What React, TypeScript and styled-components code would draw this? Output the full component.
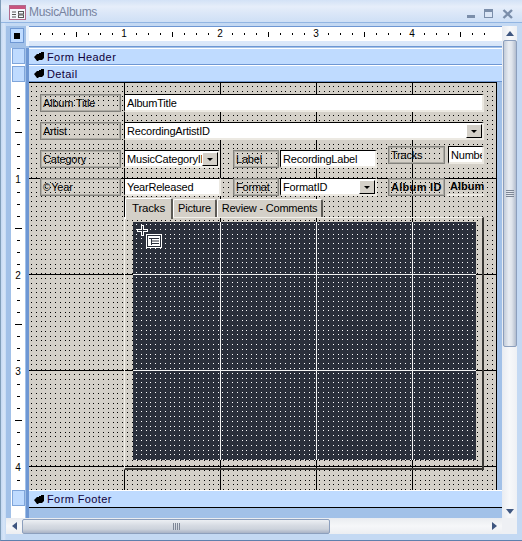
import React from 'react'
import styled, { createGlobalStyle, css } from 'styled-components'

const GlobalStyle = createGlobalStyle`
	html, body {
		margin: 0;
		padding: 0;
		background: #fff;
	}
	* {
		box-sizing: border-box;
	}
`

const dotTile = (color: string) => {
	const steps = [0, 5, 10, 14, 19]
	const rects = steps
		.flatMap(y => steps.map(x => `<rect x='${x}' y='${y}' width='1' height='1' fill='${color}'/>`))
		.join('')
	return `url("data:image/svg+xml,${encodeURIComponent(
		`<svg xmlns='http://www.w3.org/2000/svg' width='24' height='24' shape-rendering='crispEdges'>${rects}</svg>`
	)}")`
}

const gridLines = (color: string) => css`
	linear-gradient(to right, ${color} 1px, transparent 1px),
	linear-gradient(to bottom, ${color} 1px, transparent 1px)
`

const Window = styled.div`
	width: 522px;
	height: 541px;
	display: flex;
	flex-direction: column;
	overflow: hidden;
	font-family: 'Liberation Sans', Arial, sans-serif;
	font-size: 11px;
	letter-spacing: -0.2px;
	color: #000;
	background: #c4d9f3;
	border-left: 1px solid #7f9db9;
	border-bottom: 1px solid #5f80ad;
`

const TitleBar = styled.div`
	flex: none;
	height: 23px;
	display: flex;
	align-items: center;
	padding: 2px 8px 0 8px;
	background: linear-gradient(#d3e2f6, #e6eefa 30%, #dbe7f8 60%, #cfe0f6);
	border-bottom: 1px solid #92b5e2;
`

const AppIcon = styled.svg`
	flex: none;
	width: 17px;
	height: 15px;
	margin-right: 3px;
`

const TitleText = styled.span`
	font-size: 12px;
	color: #76839f;
	letter-spacing: -0.3px;
`

const WindowButtons = styled.div`
	margin-left: auto;
	margin-top: 3px;
	display: flex;
	align-items: center;
	gap: 8px;
`

const ClientFrame = styled.div`
	flex: 1;
	min-height: 0;
	display: flex;
	flex-direction: column;
	padding: 3px 5px 6px 5px;
	background: linear-gradient(90deg, #c4d9f3, #d8e6f8 3px, #c4d9f3 5px);
`

const TopRow = styled.div`
	flex: 1;
	min-height: 0;
	display: flex;
`

const DesignSurface = styled.div`
	flex: 1;
	min-width: 0;
	display: flex;
	flex-direction: column;
	background: #a2c1e8;
`

const RulerRow = styled.div`
	flex: none;
	height: 20px;
	display: flex;
	background: #e9f1fc;
`

const CornerCell = styled.div`
	flex: none;
	width: 20px;
	padding: 2px 2px 2px 4px;
	background: #a2c1e8;
`

const CornerBox = styled.div`
	width: 14px;
	height: 15px;
	display: flex;
	align-items: center;
	justify-content: center;
	background: #bfdbff;
	border: 1px solid #6e97d3;
	&::after {
		content: '';
		width: 6px;
		height: 6px;
		background: #000;
	}
`

const TopRuler = styled.div`
	flex: 1;
	display: flex;
	margin-left: 3px;
	padding-left: 5px;
	align-items: center;
	height: 18px;
	background: #fff;
	border-top: 1px solid #6e97d3;
	border-bottom: 3px solid #dbe8fa;
	box-shadow: 0 2px 0 #d8e6f8, 0 3px 0 #6e97d3;
`

const TickCell = styled.div`
	flex: none;
	width: 12px;
	height: 12px;
	display: flex;
	align-items: center;
	justify-content: center;
	font-size: 10px;
	letter-spacing: 0;
	line-height: 1;
`

const Tick = styled.i<{ $big?: boolean; $vertical?: boolean }>`
	display: block;
	background: #000;
	width: ${({ $big, $vertical }) => ($vertical ? ($big ? 7 : 3) : 1)}px;
	height: ${({ $big, $vertical }) => ($vertical ? 1 : $big ? 5 : 2)}px;
`

const BodyRow = styled.div`
	flex: 1;
	min-height: 0;
	display: flex;
	margin-top: 2px;
`

const SideRuler = styled.div`
	flex: none;
	width: 23px;
	display: flex;
	flex-direction: column;
	padding-left: 5px;
	background: linear-gradient(90deg, #a2c1e8 5px, #fff 5px, #fff 19px, #a2c1e8 19px, #a2c1e8 20px, #6e97d3 20px);
`

const SideBox = styled.div<{ $h: number; $mb?: number }>`
	flex: none;
	width: 13px;
	height: ${({ $h }) => $h}px;
	margin-left: 1px;
	margin-bottom: ${({ $mb }) => $mb ?? 0}px;
	background: #bfdbff;
	border: 1px solid #7fa5da;
`

const SideTicks = styled.div`
	flex: none;
	height: 408px;
	width: 14px;
	padding-top: 8px;
	overflow: hidden;
`

const SideTickCell = styled(TickCell)`
	width: 14px;
`

const Sections = styled.div`
	flex: 1;
	min-width: 0;
	display: flex;
	flex-direction: column;
`

const SectionBar = styled.div<{ $last?: boolean }>`
	flex: none;
	height: ${({ $last }) => ($last ? 18 : 17)}px;
	display: flex;
	align-items: center;
	padding-left: 5px;
	gap: 3px;
	font-size: 11px;
	letter-spacing: 0.4px;
	color: #10003a;
	background: #bfdbff;
	border-top: 1px solid #fff;
	border-bottom: 1px solid ${({ $last }) => ($last ? '#000' : '#6e97d3')};
`

const BarGlyph = styled.svg`
	flex: none;
	width: 10px;
	height: 9px;
`

const Canvas = styled.div`
	position: relative;
	flex: none;
	width: 468px;
	height: 408px;
	background-color: #d4d0c8;
	background-image: ${gridLines('#000')}, ${dotTile('#000')};
	background-size: 96px 96px, 96px 96px, 24px 24px;
	background-position: -1px 0, 0 0, 2px 4px;
	border-right: 1px solid #000;
`

const Placed = css<{ $x: number; $y: number; $w: number; $h?: number }>`
	position: absolute;
	left: ${({ $x }) => $x}px;
	top: ${({ $y }) => $y}px;
	width: ${({ $w }) => $w}px;
	height: ${({ $h }) => $h ?? 18}px;
`

const FieldLabel = styled.div<{ $x: number; $y: number; $w: number; $h?: number; $bold?: boolean }>`
	${Placed}
	display: flex;
	align-items: center;
	padding-left: 2px;
	white-space: nowrap;
	overflow: hidden;
	font-weight: ${({ $bold }) => ($bold ? 700 : 400)};
	letter-spacing: ${({ $bold }) => ($bold ? 0.3 : -0.2)}px;
	border: 1px solid #83827d;
	box-shadow: inset 0 0 0 1px #aeaca5;
`

const YearMark = styled.span`
	font-size: 10px;
	margin-right: 1px;
`

const TextBox = styled.div<{ $x: number; $y: number; $w: number; $h?: number }>`
	${Placed}
	display: flex;
	align-items: center;
	padding-left: 2px;
	background: #fff;
	white-space: nowrap;
	overflow: hidden;
	border-top: 1px solid #000;
	border-left: 1px solid #000;
	border-right: 2px solid #ece9e2;
	border-bottom: 2px solid #ece9e2;
`

const BoldValue = styled.div<{ $x: number; $y: number; $w: number; $h?: number }>`
	${Placed}
	display: flex;
	align-items: center;
	padding-left: 3px;
	white-space: nowrap;
	overflow: hidden;
	font-weight: 700;
	letter-spacing: 0;
	border-bottom: 2px solid #ece9e2;
`

const DropButton = styled.div`
	position: absolute;
	right: 0;
	top: 1px;
	width: 16px;
	height: 14px;
	display: flex;
	align-items: center;
	justify-content: center;
	background: #d4d0c8;
	border-top: 1px solid #fff;
	border-left: 1px solid #fff;
	border-right: 1px solid #000;
	border-bottom: 1px solid #000;
	&::after {
		content: '';
		border-left: 3px solid transparent;
		border-right: 3px solid transparent;
		border-top: 3px solid #000;
	}
`

const TabStrip = styled.div`
	position: absolute;
	left: 96px;
	top: 116px;
	display: flex;
	align-items: flex-end;
	height: 21px;
`

const Tab = styled.div<{ $active?: boolean; $w: number }>`
	width: ${({ $w }) => $w}px;
	height: ${({ $active }) => ($active ? 21 : 18)}px;
	display: flex;
	align-items: center;
	justify-content: center;
	white-space: nowrap;
	font-size: ${({ $active }) => ($active ? 11.5 : 11)}px;
	background: #d4d0c8;
	border-top: 1px solid #fff;
	border-left: 1px solid #fff;
	border-right: 2px solid #5c5a55;
	padding-bottom: ${({ $active }) => ($active ? 3 : 1)}px;
	margin-bottom: ${({ $active }) => ($active ? 0 : 2)}px;
	border-radius: 2px 2px 0 0;
	position: relative;
	z-index: ${({ $active }) => ($active ? 2 : 1)};
`

const TabPage = styled.div`
	position: absolute;
	left: 95px;
	top: 135px;
	width: 360px;
	height: 253px;
	padding: 4px 7px 8px 8px;
	border-top: 1px solid #f2f0ea;
	border-left: 1px solid #f2f0ea;
	border-right: 2px solid #3a3935;
	border-bottom: 2px solid #3a3935;
`

const Subform = styled.div`
	position: relative;
	width: 343px;
	height: 238px;
	background-color: #2a2f3b;
	background-image: ${gridLines('#f2f2f2')}, ${dotTile('#ffffff')};
	background-size: 96px 96px, 96px 96px, 24px 24px;
	background-position: 87px 0, 0 52px, 3px 2px;
`

const SubformMark = styled.svg`
	position: absolute;
	left: 4px;
	top: 3px;
	width: 26px;
	height: 24px;
`

const VScroll = styled.div`
	flex: none;
	width: 15px;
	display: flex;
	flex-direction: column;
	align-items: center;
	background: linear-gradient(90deg, #e9ecf1, #f7f8fa 50%, #eef0f4);
`

const ArrowBox = styled.div`
	flex: none;
	height: 14px;
	width: 100%;
	display: flex;
	align-items: center;
	justify-content: center;
`

const VThumb = styled.div`
	flex: none;
	width: 14px;
	height: 307px;
	display: flex;
	align-items: center;
	justify-content: center;
	border: 1px solid #8c9fbd;
	border-radius: 2px;
	background: linear-gradient(90deg, #c3ccd9, #e9edf3 40%, #dfe4eb 65%, #b2bccd);
`

const VTrack = styled.div`
	flex: 1;
`

const GripV = styled.div`
	width: 8px;
	height: 7px;
	background: repeating-linear-gradient(#7d8695 0, #7d8695 1px, transparent 1px, transparent 2px);
`

const BottomRow = styled.div`
	flex: none;
	height: 16px;
	display: flex;
`

const HScroll = styled.div`
	flex: 1;
	display: flex;
	align-items: center;
	background: linear-gradient(#eaecf0, #f6f7f9 50%, #eceef2);
`

const HArrowBox = styled.div`
	flex: none;
	width: 16px;
	height: 100%;
	display: flex;
	align-items: center;
	justify-content: center;
`

const HThumb = styled.div`
	flex: none;
	width: 308px;
	height: 15px;
	display: flex;
	align-items: center;
	justify-content: center;
	border: 1px solid #8c9fbd;
	border-radius: 2px;
	background: linear-gradient(#eceff3, #d5dae2 45%, #cdd3dc 70%, #a9b3c6);
`

const HTrack = styled.div`
	flex: 1;
`

const GripH = styled.div`
	width: 7px;
	height: 7px;
	background: repeating-linear-gradient(90deg, #7d8695 0, #7d8695 1px, transparent 1px, transparent 2px);
`

const ScrollCorner = styled.div`
	flex: none;
	width: 15px;
	background: #eef0f4;
`

const Arrow = styled.i<{ $dir: 'up' | 'down' | 'left' | 'right' }>`
	display: block;
	width: 0;
	height: 0;
	${({ $dir }) =>
		$dir === 'up'
			? 'border-left: 4px solid transparent; border-right: 4px solid transparent; border-bottom: 5px solid #3f5680;'
			: $dir === 'down'
			? 'border-left: 4px solid transparent; border-right: 4px solid transparent; border-top: 5px solid #3f5680;'
			: $dir === 'left'
			? 'border-top: 4px solid transparent; border-bottom: 4px solid transparent; border-right: 5px solid #3f5680;'
			: 'border-top: 4px solid transparent; border-bottom: 4px solid transparent; border-left: 5px solid #3f5680;'}
`

const topRulerMarks = Array.from({ length: 38 }, (_, i) => i + 1)
const sideRulerMarks = Array.from({ length: 33 }, (_, i) => i + 1)

const renderMark = (n: number, vertical: boolean) => {
	if (n % 8 === 0) return n / 8
	return <Tick $big={n % 4 === 0} $vertical={vertical} />
}

const BarArrow = () => (
	<BarGlyph viewBox='0 0 10 9'>
		<path d='M0 5 L3 2 H5 V1 H7 V0 H10 V6 L8 8 H5 L4 9 H3 Z' fill='#000' />
	</BarGlyph>
)

const App = () => {
	return (
		<>
			<GlobalStyle />
			<Window>
				<TitleBar>
					<AppIcon viewBox='0 0 17 15'>
						<rect x='0.5' y='0.5' width='16' height='14' fill='#f4f6fb' stroke='#b06a8c' />
						<rect x='1' y='1' width='15' height='3' fill='#c8557f' />
						<path d='M3 7H7M3 9.5H7M3 12H7' stroke='#555' />
						<rect x='9.5' y='6.5' width='5' height='2.5' fill='none' stroke='#555' />
						<rect x='9.5' y='10' width='5' height='2.5' fill='none' stroke='#555' />
					</AppIcon>
					<TitleText>MusicAlbums</TitleText>
					<WindowButtons>
						<svg width='10' height='10' viewBox='0 0 10 10'>
							<rect x='1' y='6' width='8' height='3' fill='#7b8eaa' />
						</svg>
						<svg width='10' height='10' viewBox='0 0 10 10'>
							<rect x='0.5' y='1.5' width='8' height='7' fill='#dbe6f6' stroke='#7b8eaa' />
							<rect x='0' y='0' width='9' height='3' fill='#7b8eaa' />
						</svg>
						<svg width='12' height='10' viewBox='0 0 12 10'>
							<path d='M1.5 1L10 9M10 1L1.5 9' stroke='#7b8eaa' strokeWidth='2.4' />
						</svg>
					</WindowButtons>
				</TitleBar>
				<ClientFrame>
					<TopRow>
						<DesignSurface>
							<RulerRow>
								<CornerCell>
									<CornerBox />
								</CornerCell>
								<TopRuler>
									{topRulerMarks.map(n => (
										<TickCell key={n}>{renderMark(n, false)}</TickCell>
									))}
								</TopRuler>
							</RulerRow>
							<BodyRow>
								<SideRuler>
									<SideBox $h={16} $mb={2} />
									<SideBox $h={16} />
									<SideTicks>
										{sideRulerMarks.map(n => (
											<SideTickCell key={n}>{renderMark(n, true)}</SideTickCell>
										))}
									</SideTicks>
									<SideBox $h={16} />
								</SideRuler>
								<Sections>
									<SectionBar>
										<BarArrow />
										Form Header
									</SectionBar>
									<SectionBar>
										<BarArrow />
										Detail
									</SectionBar>
									<Canvas>
										<FieldLabel $x={11} $y={12} $w={81}>Album Title</FieldLabel>
										<TextBox $x={95} $y={12} $w={360}>AlbumTitle</TextBox>

										<FieldLabel $x={11} $y={40} $w={81}>Artist</FieldLabel>
										<TextBox $x={95} $y={40} $w={360}>
											RecordingArtistID
											<DropButton />
										</TextBox>

										<FieldLabel $x={11} $y={68} $w={81}>Category</FieldLabel>
										<TextBox $x={95} $y={68} $w={96}>
											MusicCategoryID
											<DropButton />
										</TextBox>
										<FieldLabel $x={204} $y={68} $w={46}>Label</FieldLabel>
										<TextBox $x={251} $y={68} $w={97}>RecordingLabel</TextBox>
										<FieldLabel $x={359} $y={64} $w={57}>Tracks</FieldLabel>
										<TextBox $x={419} $y={64} $w={36}>Numbe</TextBox>

										<FieldLabel $x={11} $y={96} $w={81}>
											<YearMark>©</YearMark>Year
										</FieldLabel>
										<TextBox $x={95} $y={96} $w={97}>YearReleased</TextBox>
										<FieldLabel $x={204} $y={96} $w={46}>Format</FieldLabel>
										<TextBox $x={251} $y={96} $w={97}>
											FormatID
											<DropButton />
										</TextBox>
										<FieldLabel $x={359} $y={96} $w={57} $bold>Album ID</FieldLabel>
										<BoldValue $x={418} $y={96} $w={37}>Album</BoldValue>

										<TabPage>
											<Subform>
												<SubformMark viewBox='0 0 26 24'>
													<path d='M5.5 0V11M0 5.5H11' stroke='#fff' strokeWidth='3' />
													<path d='M5.5 1V10M1 5.5H10' stroke='#2a2f3b' strokeWidth='1' />
													<rect x='9' y='9' width='16' height='14' fill='#fff' />
													<rect x='10.5' y='10.5' width='13' height='11' fill='#fff' stroke='#2a2f3b' />
													<path d='M12 13.5H22M15 16H22M15 18.5H22M14.5 13V20' stroke='#2a2f3b' />
												</SubformMark>
											</Subform>
										</TabPage>
										<TabStrip>
											<Tab $active $w={48}>Tracks</Tab>
											<Tab $w={44}>Picture</Tab>
											<Tab $w={106}>Review - Comments</Tab>
										</TabStrip>
									</Canvas>
									<SectionBar $last>
										<BarArrow />
										Form Footer
									</SectionBar>
								</Sections>
							</BodyRow>
						</DesignSurface>
						<VScroll>
							<ArrowBox>
								<Arrow $dir='up' />
							</ArrowBox>
							<VThumb>
								<GripV />
							</VThumb>
							<VTrack />
							<ArrowBox>
								<Arrow $dir='down' />
							</ArrowBox>
						</VScroll>
					</TopRow>
					<BottomRow>
						<HScroll>
							<HArrowBox>
								<Arrow $dir='left' />
							</HArrowBox>
							<HThumb>
								<GripH />
							</HThumb>
							<HTrack />
							<HArrowBox>
								<Arrow $dir='right' />
							</HArrowBox>
						</HScroll>
						<ScrollCorner />
					</BottomRow>
				</ClientFrame>
			</Window>
		</>
	)
}

export default App
